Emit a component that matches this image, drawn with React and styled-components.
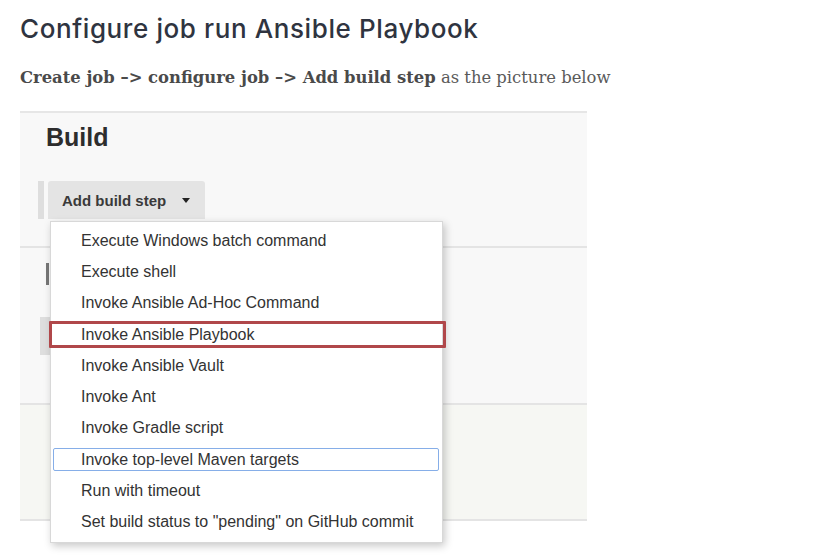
import React from "react";
import styled, { createGlobalStyle } from "styled-components";

const GlobalStyle = createGlobalStyle`
  body {
    margin: 0;
    background: #fff;
  }
`;

const steps = [
  { label: "Execute Windows batch command" },
  { label: "Execute shell" },
  { label: "Invoke Ansible Ad-Hoc Command" },
  { label: "Invoke Ansible Playbook", mark: "red" },
  { label: "Invoke Ansible Vault" },
  { label: "Invoke Ant" },
  { label: "Invoke Gradle script" },
  { label: "Invoke top-level Maven targets", mark: "blue" },
  { label: "Run with timeout" },
  { label: 'Set build status to "pending" on GitHub commit' },
];

const Page = styled.div`
  padding: 12px 20px 0 20px;
  width: 814px;
  height: 558px;
  box-sizing: border-box;
  overflow: hidden;
`;

const Title = styled.h2`
  margin: 0;
  font-family: Inter, "Open Sans", sans-serif;
  font-weight: 500;
  font-size: 26px;
  letter-spacing: 0.6px;
  line-height: 34px;
  color: #2f3440;
`;

const Lead = styled.p`
  margin: 18px 0 0 0;
  font-family: "DejaVu Serif", serif;
  font-size: 16.4px;
  line-height: 28px;
  color: #5a5a5a;
  b {
    font-weight: 600;
    color: #4a4a4a;
  }
`;

const Shot = styled.div`
  position: relative;
  margin-top: 19px;
  width: 567px;
  height: 437px;
  background: #fff;
  font-family: "Liberation Sans", Arial, sans-serif;
  color: #333;
`;

const Section = styled.div`
  box-sizing: border-box;
  height: ${(p) => p.h}px;
  background: ${(p) => p.bg || "#f8f8f8"};
  border-top: ${(p) => (p.top ? "2px solid #e6e6e6" : "none")};
  border-bottom: 2px solid #e4e4e4;
`;

const BuildHead = styled.div`
  padding: 9px 0 0 26px;
  font-weight: bold;
  font-size: 25px;
  line-height: 30px;
  color: #2d2d2d;
`;

const StepRow = styled.div`
  display: flex;
  align-items: stretch;
  margin: 29px 0 0 18px;
  gap: 4px;
`;

const Grip = styled.div`
  width: 6px;
  background: #dedede;
`;

const AddButton = styled.div`
  display: flex;
  align-items: center;
  gap: 16px;
  height: 38px;
  padding: 0 15px 0 14px;
  background: #e4e4e4;
  border-radius: 3px 3px 0 0;
  font-weight: bold;
  font-size: 15px;
  color: #3a3a3a;
`;

const Caret = styled.span`
  width: 0;
  height: 0;
  border-left: 4.5px solid transparent;
  border-right: 4.5px solid transparent;
  border-top: 5px solid #222;
`;

const MidBody = styled.div`
  display: flex;
  flex-direction: column;
  padding: 15px 0 0 26px;
`;

const DarkTick = styled.div`
  width: 3px;
  height: 22px;
  background: #777;
`;

const GrayBlock = styled.div`
  width: 10px;
  height: 38px;
  margin: 32px 0 0 -6px;
  background: #dedede;
`;

const Menu = styled.div`
  position: absolute;
  left: 30px;
  top: 110px;
  width: 393px;
  height: 322px;
  box-sizing: border-box;
  padding-top: 3px;
  background: #fff;
  border: 1px solid #d8d8d8;
  box-shadow: 2px 3px 8px rgba(0, 0, 0, 0.22);
`;

const Item = styled.div`
  position: relative;
  height: 31.3px;
  display: flex;
  align-items: center;
  padding-left: 30px;
  font-size: 16px;
  color: #333;
  &::after {
    content: "";
    position: absolute;
    display: ${(p) => (p.mark ? "block" : "none")};
    top: ${(p) => (p.mark === "red" ? 2 : 4)}px;
    bottom: ${(p) => (p.mark === "red" ? 2 : 4)}px;
    left: ${(p) => (p.mark === "red" ? -2 : 2)}px;
    right: ${(p) => (p.mark === "red" ? -4 : 3)}px;
    border: ${(p) =>
      p.mark === "red" ? "3px solid #b0474a" : "1.5px solid #86aee8"};
    border-radius: ${(p) => (p.mark === "red" ? 1 : 2)}px;
  }
`;

export default function App() {
  return (
    <Page>
      <GlobalStyle />
      <Title>Configure job run Ansible Playbook</Title>
      <Lead>
        <b>Create job –&gt; configure job –&gt; Add build step</b> as the
        picture below
      </Lead>
      <Shot>
        <Section h={137} top>
          <BuildHead>Build</BuildHead>
          <StepRow>
            <Grip />
            <AddButton>
              Add build step <Caret />
            </AddButton>
          </StepRow>
        </Section>
        <Section h={157}>
          <MidBody>
            <DarkTick />
            <GrayBlock />
          </MidBody>
        </Section>
        <Section h={116} bg="#f6f7f3" />
        <Menu>
          {steps.map((s) => (
            <Item key={s.label} mark={s.mark}>
              {s.label}
            </Item>
          ))}
        </Menu>
      </Shot>
    </Page>
  );
}
